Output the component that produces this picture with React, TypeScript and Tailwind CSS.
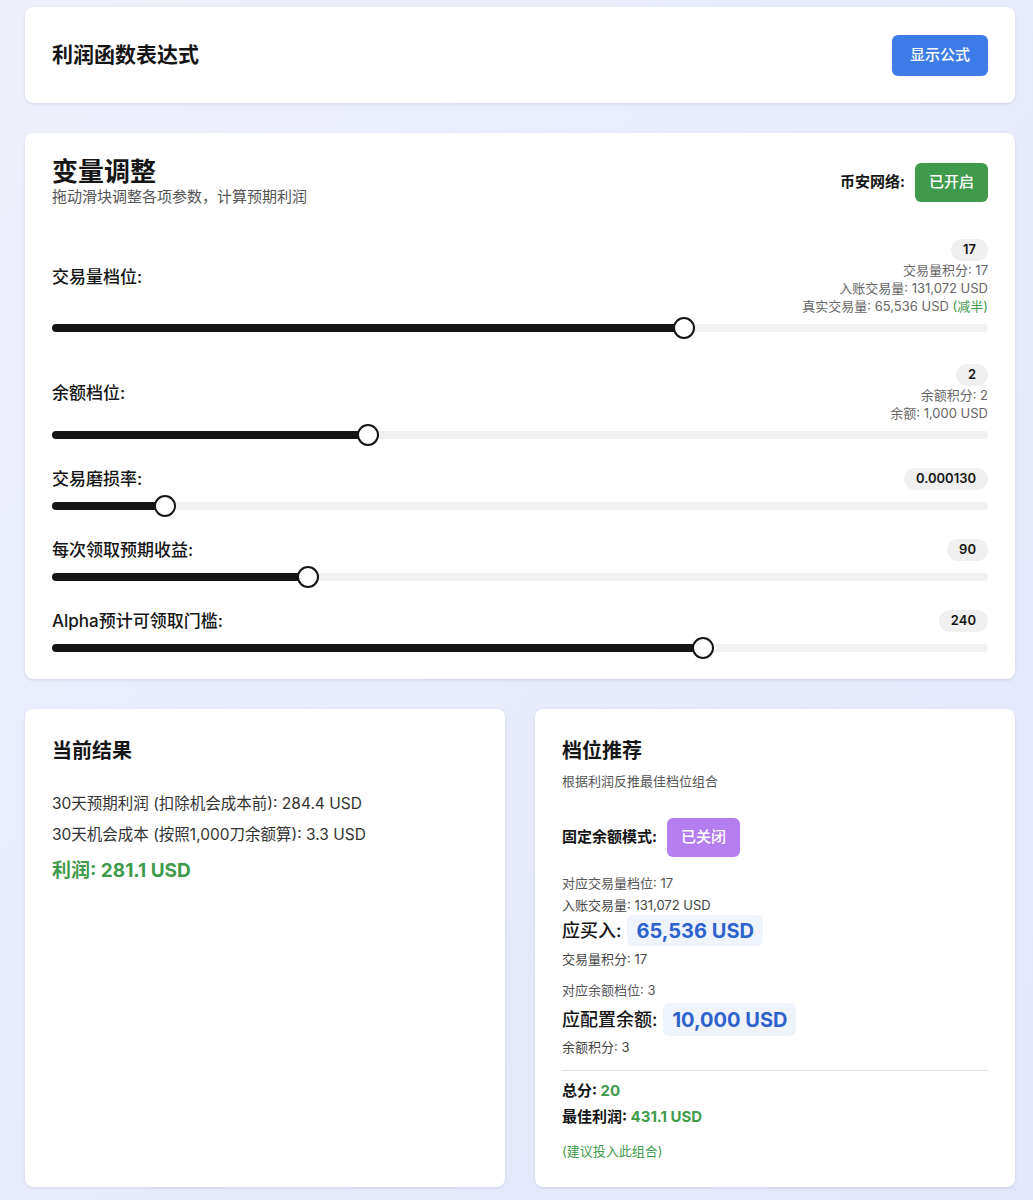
import React from "react";

const FONT = "font-['Inter','Noto_Sans_CJK_SC',sans-serif]";

export default function App() {
  return (
    <div
      className={`${FONT} min-h-[1200px] bg-gradient-to-br from-[#eef0fb] to-[#e2e7fb] pt-[7px] pr-[18px] pl-[25px] text-[#151515]`}
    >
      {/* 利润函数表达式 */}
      <section className="flex h-[96px] items-center justify-between rounded-lg bg-white px-[27px] shadow-[0_1px_3px_rgba(40,50,90,0.12)]">
        <h2 className="text-[21px] font-bold">利润函数表达式</h2>
        <button className="h-[41px] rounded-md bg-[#3d7ce6] px-[18px] text-[15px] font-medium text-white">
          显示公式
        </button>
      </section>

      {/* 变量调整 */}
      <section className="mt-[30px] h-[546px] rounded-lg bg-white px-[27px] pt-6 shadow-[0_1px_3px_rgba(40,50,90,0.12)]">
        <div className="flex items-center justify-between">
          <div>
            <h2 className="text-[26px] leading-[30px] font-bold">变量调整</h2>
            <p className="text-[15px] leading-5 text-[#555]">拖动滑块调整各项参数，计算预期利润</p>
          </div>
          <div className="flex items-center gap-[10px]">
            <span className="text-[15px] font-bold">币安网络:</span>
            <button className="h-[39px] rounded-md bg-[#3f9a4b] px-[14px] text-[15px] font-medium text-white">
              已开启
            </button>
          </div>
        </div>

        <div className="mt-8 flex flex-col gap-[29px]">
          <Slider
            label="交易量档位:"
            value="17"
            pct={67.5}
            extra="mb-[3px]"
            notes={[
              <>交易量积分: 17</>,
              <>入账交易量: 131,072 USD</>,
              <>
                真实交易量: 65,536 USD <span className="text-[#3f9a4b]">(减半)</span>
              </>,
            ]}
          />
          <Slider
            label="余额档位:"
            value="2"
            pct={33.8}
            notes={[<>余额积分: 2</>, <>余额: 1,000 USD</>]}
          />
          <Slider label="交易磨损率:" value="0.000130" pct={12.1} />
          <Slider label="每次领取预期收益:" value="90" pct={27.3} />
          <Slider label="Alpha预计可领取门槛:" value="240" pct={69.6} />
        </div>
      </section>

      <div className="mt-[30px] grid grid-cols-2 gap-[30px]">
        {/* 当前结果 */}
        <section className="h-[478px] rounded-lg bg-white px-[27px] pt-7 shadow-[0_1px_3px_rgba(40,50,90,0.12)]">
          <h3 className="text-[20px] leading-7 font-bold">当前结果</h3>
          <p className="mt-7 text-[15.5px] leading-[22px] text-[#333]">30天预期利润 (扣除机会成本前): 284.4 USD</p>
          <p className="mt-[9px] text-[15.5px] leading-[22px] text-[#333]">30天机会成本 (按照1,000刀余额算): 3.3 USD</p>
          <p className="mt-[11px] text-[19px] leading-7 font-bold text-[#3f9a4b]">利润: 281.1 USD</p>
        </section>

        {/* 档位推荐 */}
        <section className="h-[478px] rounded-lg bg-white px-[27px] pt-7 shadow-[0_1px_3px_rgba(40,50,90,0.12)]">
          <h3 className="text-[20px] leading-7 font-bold">档位推荐</h3>
          <p className="mt-1.5 text-[13px] leading-5 text-[#555]">根据利润反推最佳档位组合</p>

          <div className="mt-[27px] flex items-center gap-[10px]">
            <span className="text-[15px] font-bold">固定余额模式:</span>
            <button className="h-[39px] rounded-md bg-[#b47ef0] px-[14px] text-[15px] font-medium text-white">
              已关闭
            </button>
          </div>

          <p className="mt-4 text-[13px] leading-5 text-[#555]">对应交易量档位: 17</p>
          <p className="mt-0.5 text-[13px] leading-5 text-[#444]">入账交易量: 131,072 USD</p>
          <div className="flex items-center gap-[6px]">
            <span className="text-[18px] font-medium">应买入:</span>
            <span className="flex h-[31px] items-center rounded-md bg-[#eef3fc] px-[9px] text-[20px] font-bold text-[#2d62cc]">
              65,536 USD
            </span>
          </div>
          <p className="mt-[3px] text-[13px] leading-5 text-[#444]">交易量积分: 17</p>

          <p className="mt-[11px] text-[13px] leading-5 text-[#555]">对应余额档位: 3</p>
          <div className="mt-[3px] flex items-center gap-[6px]">
            <span className="text-[18px] font-medium">应配置余额:</span>
            <span className="flex h-[33px] items-center rounded-md bg-[#eef3fc] px-[9px] text-[20px] font-bold text-[#2d62cc]">
              10,000 USD
            </span>
          </div>
          <p className="mt-px text-[13px] leading-5 text-[#444]">余额积分: 3</p>

          <div className="mt-[13px] border-t border-[#e2e2e2]" />
          <p className="mt-[9px] text-[15px] leading-[22px] font-bold">
            总分: <span className="text-[#3f9a4b]">20</span>
          </p>
          <p className="mt-1 text-[15px] leading-[22px] font-bold">
            最佳利润: <span className="text-[#3f9a4b]">431.1 USD</span>
          </p>
          <p className="mt-[13px] text-[13px] leading-5 text-[#3f9a4b]">(建议投入此组合)</p>
        </section>
      </div>
    </div>
  );
}

function Slider({
  label,
  value,
  pct,
  notes,
  extra,
}: {
  label: string;
  value: string;
  pct: number;
  notes?: React.ReactNode[];
  extra?: string;
}) {
  return (
    <div className={extra}>
      <div className="flex items-center justify-between">
        <span className="text-[17px] leading-[22px] font-medium text-[#151515]">{label}</span>
        <div className="flex flex-col items-end">
          <span className="flex h-[22px] items-center rounded-full bg-[#f0f0f0] px-3 text-[13px] font-semibold">
            {value}
          </span>
          {notes?.map((n, i) => (
            <span key={i} className="text-[13px] leading-[18px] text-[#666]">
              {n}
            </span>
          ))}
        </div>
      </div>
      <div className={`relative h-2 rounded-full bg-[#f1f1f1] ${notes ? "mt-[9px]" : "mt-3"}`}>
        <div className="h-full rounded-full bg-[#151515]" style={{ width: `${pct}%` }} />
        <div
          className="absolute top-1/2 h-[22px] w-[22px] -translate-x-1/2 -translate-y-1/2 rounded-full border-2 border-[#151515] bg-white"
          style={{ left: `${pct}%` }}
        />
      </div>
    </div>
  );
}
